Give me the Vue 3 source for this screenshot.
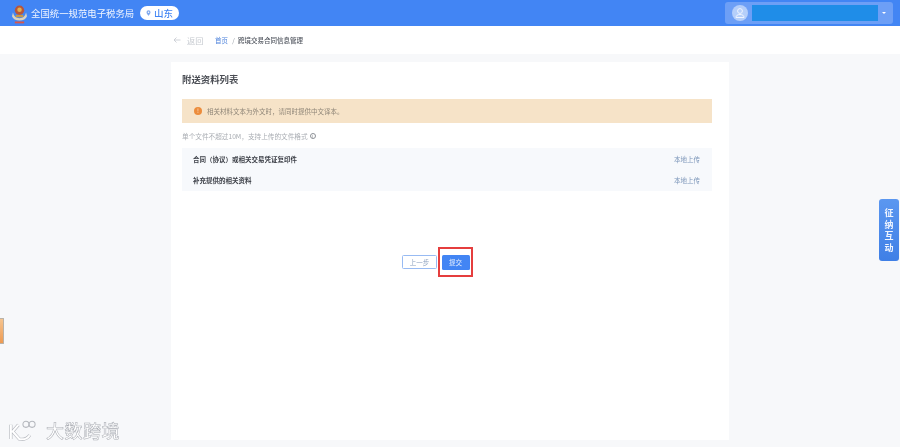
<script setup>
const rows = ['合同（协议）或相关交易凭证复印件', '补充提供的相关资料']
</script>

<template>
  <div class="page">
    <header class="topbar">
      <div class="brand">
        <svg class="emblem" viewBox="0 0 16 22">
          <path d="M1 10c1 4 3 6 7 6s6-2 7-6l1 4c-1 3-4 4.500-8 4.500S1 17 0 14z" fill="#d9d2c0" />
          <circle cx="8" cy="7.500" r="5" fill="#b8553a" />
          <circle cx="8" cy="7" r="2.400" fill="#e0b050" />
          <path d="M4 12.500h8v2.500H4z" fill="#c99a45" />
          <rect x="3" y="19.500" width="10" height="2" fill="#d8564a" />
        </svg>
        <span class="site">全国统一规范电子税务局</span>
        <span class="region">
          <svg class="pin" viewBox="0 0 10 12"><path d="M5 .5a4 4 0 0 0-4 4C1 7.500 5 11.500 5 11.500S9 7.500 9 4.500a4 4 0 0 0-4-4zm0 5.500a1.500 1.500 0 1 1 0-3 1.500 1.500 0 0 1 0 3z" fill="#7fa8ee" /></svg>
          山东
        </span>
      </div>
      <div class="user">
        <svg class="avatar" viewBox="0 0 16 16">
          <circle cx="8" cy="8" r="8" fill="#b5cffa" />
          <circle cx="8" cy="6" r="2.400" fill="none" stroke="#eef4ff" stroke-width="1" />
          <path d="M4 12.500c0-2 1.500-3 4-3s4 1 4 3z" fill="none" stroke="#eef4ff" stroke-width="1" />
        </svg>
        <span class="mask"></span>
        <span class="caret"></span>
      </div>
    </header>

    <nav class="crumbs">
      <svg class="back" viewBox="0 0 8 8"><path d="M7.500 4H1M3.500 1.500 1 4l2.500 2.500" fill="none" stroke="#c4c8cf" stroke-width=".8" /></svg>
      <span class="return">返回</span>
      <span class="home">首页</span>
      <span class="sep">/</span>
      <span class="current">跨境交易合同信息管理</span>
    </nav>

    <main class="main">
      <section class="card">
        <h2 class="title">附送资料列表</h2>
        <div class="alert">
          <span class="alert-icon">!</span>
          <span>相关材料文本为外文时，请同时提供中文译本。</span>
        </div>
        <p class="hint">
          单个文件不超过10M，支持上传的文件格式
          <span class="info">i</span>
        </p>
        <div class="table">
          <div v-for="row in rows" :key="row" class="row">
            <span class="name">{{ row }}</span>
            <span class="upload">本地上传</span>
          </div>
        </div>
        <div class="actions">
          <button class="btn prev">上一步</button>
          <div class="highlight">
            <button class="btn submit">提交</button>
          </div>
        </div>
      </section>
    </main>

    <div class="side-left"></div>
    <div class="side-right">征<br />纳<br />互<br />动</div>

    <div class="watermark">
      <svg class="wm-logo" viewBox="0 0 36 24">
        <path d="M3 6v15M11 6 5 13l7 8c5 1 9-1 11-4" fill="none" stroke="#b4b7bd" stroke-width="3.400" />
        <path d="M3 6v15M11 6 5 13l7 8c5 1 9-1 11-4" fill="none" stroke="#fff" stroke-width="2.200" />
        <circle cx="19" cy="5.500" r="3.200" fill="none" stroke="#b4b7bd" stroke-width="1.100" />
        <circle cx="25.500" cy="5.500" r="3.200" fill="none" stroke="#b4b7bd" stroke-width="1.100" />
      </svg>
      <span class="wm-text">大数跨境</span>
    </div>
  </div>
</template>

<style>
html, body { margin: 0; background: #f7f8fa; }
</style>

<style scoped>
.page {
  position: relative;
  width: 900px;
  height: 447px;
  overflow: hidden;
  background: #f7f8fa;
  font-family: "Noto Sans CJK SC", "Liberation Sans", sans-serif;
  filter: blur(0.55px);
}
.topbar {
  height: 26px;
  background: #4285f4;
  display: flex;
  align-items: center;
  justify-content: space-between;
  padding: 0 7px 0 12px;
}
.brand { display: flex; align-items: center; }
.emblem { width: 15px; height: 21px; margin-right: 4px; }
.site { color: #f0f5ff; font-size: 9.400px; width: 109px; white-space: nowrap; }
.region {
  width: 39px;
  height: 14px;
  border-radius: 7px;
  background: #fff;
  color: #4285f4;
  font-size: 9.500px;
  font-weight: 500;
  display: flex;
  align-items: center;
  justify-content: center;
  gap: 3px;
}
.pin { width: 5px; height: 6px; }
.user {
  width: 168px;
  height: 22px;
  box-sizing: border-box;
  padding: 0 6px 0 7px;
  background: #6d9ff6;
  border-radius: 3px;
  display: flex;
  align-items: center;
}
.avatar { width: 16px; height: 16px; }
.mask { width: 126px; height: 16px; margin-left: 4px; background: #1f8de8; }
.caret {
  margin-left: 4px;
  border: 2.500px solid transparent;
  border-top-color: #fff;
  border-bottom-width: 0;
}
.crumbs {
  height: 28px;
  background: #fff;
  display: flex;
  align-items: center;
  padding-left: 173px;
  font-size: 6.500px;
}
.back { width: 8px; height: 8px; margin-right: 6px; }
.return { color: #c6cad0; font-size: 8.200px; width: 28px; }
.home { color: #4f84dc; width: 14px; }
.sep { color: #9aa0a8; width: 9px; text-align: center; }
.current { color: #50555e; font-weight: 500; }
.main { display: flex; justify-content: center; padding-top: 8px; }
.card {
  width: 558px;
  height: 378px;
  box-sizing: border-box;
  background: #fff;
  padding: 10px 17px 0 11px;
}
.title {
  margin: 0;
  font-size: 9.400px;
  line-height: 14px;
  font-weight: 700;
  color: #4a4d54;
}
.alert {
  margin-top: 13px;
  height: 24px;
  background: #f6e3c8;
  display: flex;
  align-items: center;
  padding-left: 12px;
  gap: 5px;
  font-size: 6.500px;
  color: #8f8678;
}
.alert-icon {
  width: 8px;
  height: 8px;
  border-radius: 50%;
  background: #ec8c3c;
  color: #fbe6d2;
  font-size: 6px;
  line-height: 8px;
  text-align: center;
}
.hint {
  margin: 8px 0 0;
  height: 10px;
  font-size: 6.650px;
  line-height: 10px;
  color: #a9adb3;
  display: flex;
  align-items: center;
  gap: 2px;
}
.info {
  width: 6px;
  height: 6px;
  box-sizing: border-box;
  border: .7px solid #8d9197;
  border-radius: 50%;
  font-size: 4.500px;
  line-height: 5px;
  text-align: center;
  color: #8d9197;
}
.table { margin-top: 7px; background: #f7f9fc; }
.row {
  height: 21.500px;
  display: flex;
  align-items: center;
  justify-content: space-between;
  padding: 0 12px 0 11px;
  font-size: 6.500px;
}
.name { font-weight: 700; color: #3d4048; }
.upload { color: #7b95b8; }
.actions {
  margin-top: 56px;
  margin-left: 220px;
  display: flex;
  align-items: center;
  gap: 1px;
}
.btn {
  box-sizing: border-box;
  padding: 0;
  border-radius: 1.500px;
  font-family: inherit;
  font-size: 6.500px;
}
.prev {
  width: 35px;
  height: 14px;
  background: #fff;
  border: 1px solid #98bbf3;
  color: #8ea2bf;
}
.highlight {
  width: 35px;
  height: 30px;
  box-sizing: border-box;
  border: 2px solid #e53e3e;
  display: flex;
  align-items: center;
  justify-content: center;
}
.submit {
  width: 28px;
  height: 15px;
  background: #4285f4;
  border: 0;
  color: #e6effe;
}
.side-left {
  position: absolute;
  left: 0;
  top: 318px;
  width: 3px;
  height: 24px;
  border-radius: 0 1px 1px 0;
  background: linear-gradient(#f5c48f, #ee9a52);
  border: solid #b9b2a8;
  border-width: .5px .5px .5px 0;
}
.side-right {
  position: absolute;
  right: 1px;
  top: 199px;
  width: 20px;
  height: 62px;
  box-sizing: border-box;
  padding-top: 8px;
  border-radius: 3px;
  background: linear-gradient(#5b97f0, #3f7fe6);
  color: #eef4ff;
  font-size: 9px;
  font-weight: 700;
  line-height: 11.500px;
  text-align: center;
}
.watermark {
  position: absolute;
  left: 8px;
  top: 418px;
  display: flex;
  align-items: center;
  gap: 4px;
}
.wm-logo { width: 34px; height: 23px; }
.wm-text {
  font-size: 18px;
  line-height: 24px;
  font-weight: 500;
  color: #fff;
  letter-spacing: .5px;
  -webkit-text-stroke: .5px #a8abb2;
}
</style>
